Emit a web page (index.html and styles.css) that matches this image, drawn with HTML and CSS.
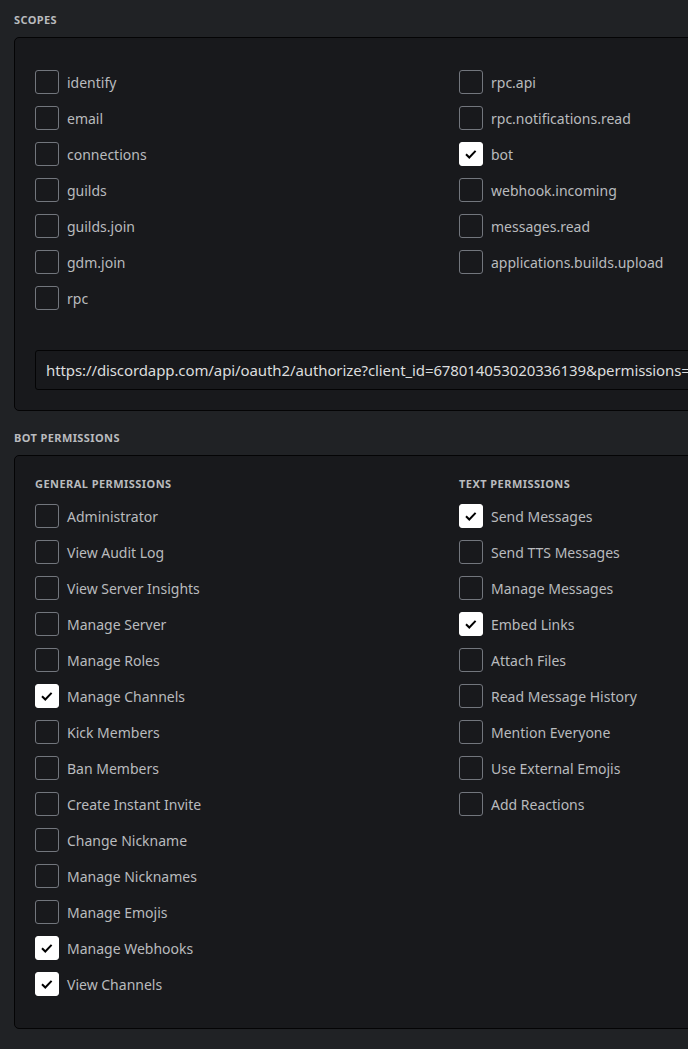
FILE: index.html
```html
<!DOCTYPE html>
<html>
<head>
<meta charset="utf-8">
<link rel="stylesheet" href="styles.css">
</head>
<body>
<div class="page">
  <h2 class="section-title">Scopes</h2>
  <div class="card">
    <div class="grid scopes">
      <div class="col">
        <label class="row"><span class="box"></span><span class="label">identify</span></label>
        <label class="row"><span class="box"></span><span class="label">email</span></label>
        <label class="row"><span class="box"></span><span class="label">connections</span></label>
        <label class="row"><span class="box"></span><span class="label">guilds</span></label>
        <label class="row"><span class="box"></span><span class="label">guilds.join</span></label>
        <label class="row"><span class="box"></span><span class="label">gdm.join</span></label>
        <label class="row"><span class="box"></span><span class="label">rpc</span></label>
      </div>
      <div class="col">
        <label class="row"><span class="box"></span><span class="label">rpc.api</span></label>
        <label class="row"><span class="box"></span><span class="label">rpc.notifications.read</span></label>
        <label class="row"><span class="box checked"><svg viewBox="0 0 24 24" width="24" height="24"><path d="M7 12.2l3.3 3.3 6.3-6.6" fill="none" stroke="#000" stroke-width="2"/></svg></span><span class="label">bot</span></label>
        <label class="row"><span class="box"></span><span class="label">webhook.incoming</span></label>
        <label class="row"><span class="box"></span><span class="label">messages.read</span></label>
        <label class="row"><span class="box"></span><span class="label">applications.builds.upload</span></label>
      </div>
    </div>
    <div class="url">https://discordapp.com/api/oauth2/authorize?client_id=678014053020336139&amp;permissions=536988672&amp;scope=bot</div>
  </div>

  <h2 class="section-title spaced">Bot Permissions</h2>
  <div class="card">
    <div class="grid perms">
      <div class="col">
        <h3 class="sub-title">General Permissions</h3>
        <label class="row"><span class="box"></span><span class="label">Administrator</span></label>
        <label class="row"><span class="box"></span><span class="label">View Audit Log</span></label>
        <label class="row"><span class="box"></span><span class="label">View Server Insights</span></label>
        <label class="row"><span class="box"></span><span class="label">Manage Server</span></label>
        <label class="row"><span class="box"></span><span class="label">Manage Roles</span></label>
        <label class="row"><span class="box checked"><svg viewBox="0 0 24 24" width="24" height="24"><path d="M7 12.2l3.3 3.3 6.3-6.6" fill="none" stroke="#000" stroke-width="2"/></svg></span><span class="label">Manage Channels</span></label>
        <label class="row"><span class="box"></span><span class="label">Kick Members</span></label>
        <label class="row"><span class="box"></span><span class="label">Ban Members</span></label>
        <label class="row"><span class="box"></span><span class="label">Create Instant Invite</span></label>
        <label class="row"><span class="box"></span><span class="label">Change Nickname</span></label>
        <label class="row"><span class="box"></span><span class="label">Manage Nicknames</span></label>
        <label class="row"><span class="box"></span><span class="label">Manage Emojis</span></label>
        <label class="row"><span class="box checked"><svg viewBox="0 0 24 24" width="24" height="24"><path d="M7 12.2l3.3 3.3 6.3-6.6" fill="none" stroke="#000" stroke-width="2"/></svg></span><span class="label">Manage Webhooks</span></label>
        <label class="row"><span class="box checked"><svg viewBox="0 0 24 24" width="24" height="24"><path d="M7 12.2l3.3 3.3 6.3-6.6" fill="none" stroke="#000" stroke-width="2"/></svg></span><span class="label">View Channels</span></label>
      </div>
      <div class="col">
        <h3 class="sub-title">Text Permissions</h3>
        <label class="row"><span class="box checked"><svg viewBox="0 0 24 24" width="24" height="24"><path d="M7 12.2l3.3 3.3 6.3-6.6" fill="none" stroke="#000" stroke-width="2"/></svg></span><span class="label">Send Messages</span></label>
        <label class="row"><span class="box"></span><span class="label">Send TTS Messages</span></label>
        <label class="row"><span class="box"></span><span class="label">Manage Messages</span></label>
        <label class="row"><span class="box checked"><svg viewBox="0 0 24 24" width="24" height="24"><path d="M7 12.2l3.3 3.3 6.3-6.6" fill="none" stroke="#000" stroke-width="2"/></svg></span><span class="label">Embed Links</span></label>
        <label class="row"><span class="box"></span><span class="label">Attach Files</span></label>
        <label class="row"><span class="box"></span><span class="label">Read Message History</span></label>
        <label class="row"><span class="box"></span><span class="label">Mention Everyone</span></label>
        <label class="row"><span class="box"></span><span class="label">Use External Emojis</span></label>
        <label class="row"><span class="box"></span><span class="label">Add Reactions</span></label>
      </div>
    </div>
  </div>
</div>
</body>
</html>
```

FILE: styles.css
```css
html, body {
  margin: 0;
  padding: 0;
  background: #202225;
  overflow: hidden;
}

.page {
  padding: 12px 0 0 14px;
  font-family: "Noto Sans", "Open Sans", sans-serif;
  color: #b9bbbe;
  width: 1000px;
}

.section-title {
  margin: 0 0 9px 0;
  font-size: 11px;
  line-height: 16px;
  font-weight: 700;
  text-transform: uppercase;
  color: #b9bbbe;
  letter-spacing: 0.4px;
}

.section-title.spaced {
  margin-top: 19px;
}

.card {
  width: 880px;
  background: #18191c;
  border: 1px solid #040405;
  border-radius: 5px;
  padding: 20px;
}

.grid {
  display: grid;
  grid-template-columns: 424px 424px;
}

.scopes {
  padding-top: 12px;
  margin-bottom: 28px;
}

.col {
  display: flex;
  flex-direction: column;
}

.sub-title {
  margin: 0 0 12px 0;
  font-size: 11px;
  line-height: 16px;
  font-weight: 700;
  text-transform: uppercase;
  color: #b9bbbe;
  letter-spacing: 0.45px;
}

.row {
  display: flex;
  align-items: center;
  height: 24px;
  margin-bottom: 12px;
}

.box {
  box-sizing: border-box;
  width: 24px;
  height: 24px;
  border: 1px solid #72767d;
  border-radius: 3px;
  flex: none;
  display: flex;
}

.box.checked {
  background: #ffffff;
  border-color: #ffffff;
}

.box.checked svg {
  margin: -1px;
}

.label {
  margin-left: 8px;
  padding-top: 2px;
  font-size: 14px;
  line-height: 20px;
  color: #b9bbbe;
  white-space: nowrap;
}

.url {
  box-sizing: border-box;
  height: 40px;
  width: 860px;
  border: 1px solid #040405;
  border-radius: 3px;
  background: #18191c;
  padding: 0 10px;
  display: flex;
  align-items: center;
  font-size: 15px;
  letter-spacing: -0.1px;
  color: #dcddde;
  white-space: nowrap;
  overflow: hidden;
}
```
